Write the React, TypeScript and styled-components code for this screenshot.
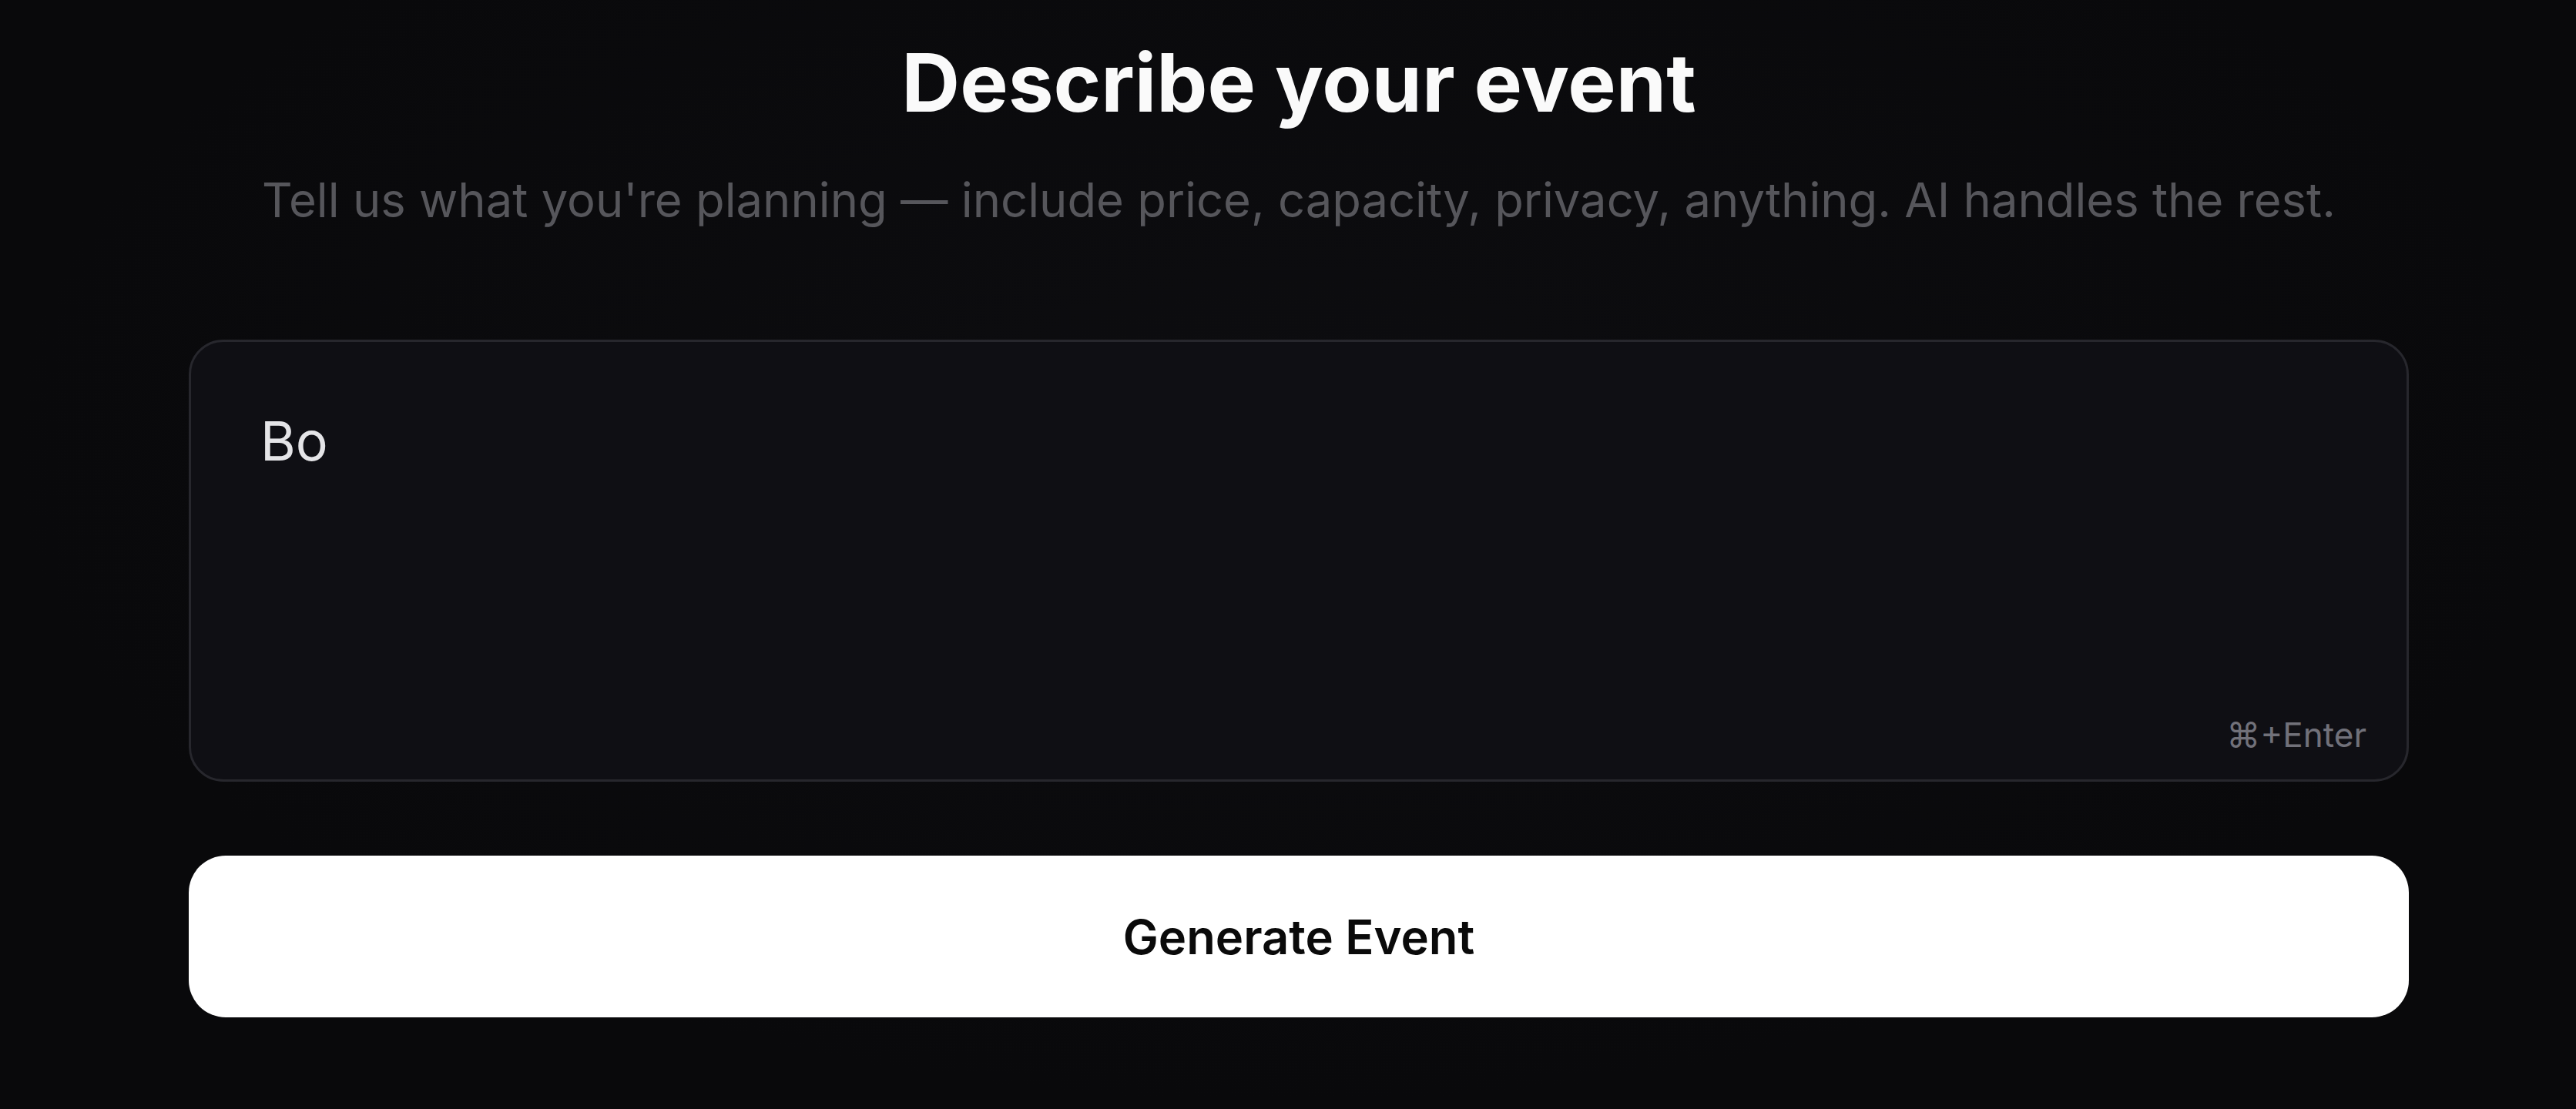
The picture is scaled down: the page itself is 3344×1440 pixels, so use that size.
import { FunctionComponent, useState } from "react";
import styled, { createGlobalStyle } from "styled-components";

const GlobalStyle = createGlobalStyle`
  html, body {
    margin: 0;
    padding: 0;
    background: #09090b;
    font-family: Inter, "Noto Sans", sans-serif;
  }
`;

const Page = styled.main`
  min-height: 1440px;
  display: flex;
  justify-content: center;
  padding: 45px 0 0 28px;
  box-sizing: border-box;
  background: radial-gradient(ellipse at 50% 40%, #0d0d10 0%, #09090b 70%);
`;

const Column = styled.section`
  width: 2882px;
  display: flex;
  flex-direction: column;
  align-items: stretch;
`;

const Title = styled.h1`
  margin: 0;
  text-align: center;
  color: #fafafa;
  font-size: 105px;
  line-height: 124px;
  font-weight: 700;
`;

const Subtitle = styled.p`
  margin: 45px 0 0;
  text-align: center;
  color: #56565b;
  font-size: 61.5px;
  line-height: 92px;
  font-weight: 400;
`;

const Field = styled.div`
  position: relative;
  margin-top: 135px;
  height: 574px;
  box-sizing: border-box;
  border: 3px solid #27272d;
  border-radius: 45px;
  background: #0f0f14;
`;

const Input = styled.textarea`
  width: 100%;
  height: 100%;
  box-sizing: border-box;
  padding: 76px 90px;
  border: none;
  outline: none;
  resize: none;
  background: transparent;
  color: #e4e4e7;
  font-family: Inter, "Noto Sans", sans-serif;
  font-size: 70px;
  line-height: 105px;
`;

const Hint = styled.span`
  position: absolute;
  right: 52px;
  bottom: 28px;
  color: #71717a;
  font-size: 44px;
  line-height: 60px;
`;

const Submit = styled.button`
  margin-top: 96px;
  height: 210px;
  border: none;
  border-radius: 48px;
  background: #ffffff;
  color: #0a0a0a;
  font-family: Inter, "Noto Sans", sans-serif;
  font-size: 61.5px;
  font-weight: 600;
  cursor: pointer;
`;

const EventPrompt: FunctionComponent = () => {
  const [text, setText] = useState("Bo");

  return (
    <Column>
      <Title>Describe your event</Title>
      <Subtitle>
        Tell us what you're planning — include price, capacity, privacy,
        anything. AI handles the rest.
      </Subtitle>
      <Field>
        <Input value={text} onChange={(e) => setText(e.target.value)} />
        <Hint>⌘+Enter</Hint>
      </Field>
      <Submit>Generate Event</Submit>
    </Column>
  );
};

const App = () => (
  <>
    <GlobalStyle />
    <Page>
      <EventPrompt />
    </Page>
  </>
);

export default App;
